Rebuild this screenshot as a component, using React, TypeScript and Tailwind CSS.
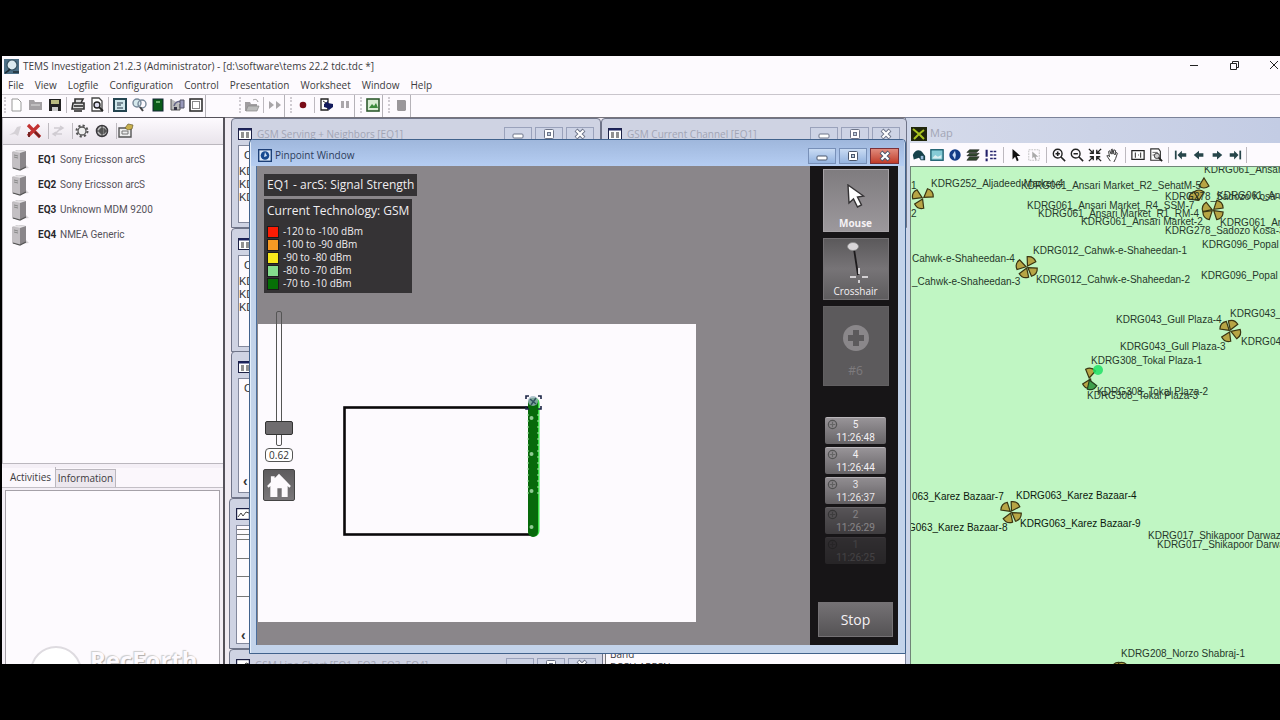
import React from "react";

type IconName =
  | "new" | "open" | "save" | "print" | "preview" | "dialog" | "find" | "book" | "export" | "frame"
  | "folder" | "forward" | "record" | "write" | "pause" | "picture" | "stack";

const glyphs: Record<IconName, React.ReactNode> = {
  new: <path d="M3 2h6l3 3v9H3z" fill="#fff" stroke="#999" />,
  open: <><path d="M1 3h5l1 2h7v8H1z" fill="#a3a0a3" /><path d="M3 8h9" stroke="#ddd" /></>,
  save: <><path d="M2 2h12v12H2z" fill="#222" /><path d="M4 3h8v4H4z" fill="#b9bb80" /><path d="M5 10h6v4H5z" fill="#ccc" /></>,
  print: <><path d="M5 6V2h8l-2 4M3 6h11v6H2z" fill="#ddd" stroke="#333" strokeWidth="1.6" /><path d="M4 9h9M4 14h8" stroke="#222" strokeWidth="1.6" /></>,
  preview: <><path d="M3 1h7l3 3v10H3z" fill="#fff" stroke="#444" strokeWidth="1.3" /><circle cx="8" cy="8" r="3" fill="#dde" stroke="#222" strokeWidth="1.4" /><path d="m10 10 4 4" stroke="#222" strokeWidth="1.8" /></>,
  dialog: <><rect x="2" y="2" width="12" height="12" fill="#cfe6ea" stroke="#244450" strokeWidth="2" /><path d="M5 6h6M5 8h4M5 11h6" stroke="#234" strokeWidth="1.2" /></>,
  find: <><circle cx="6" cy="6" r="4" fill="#d5e8ec" stroke="#789" strokeWidth="1.4" /><circle cx="11" cy="7" r="4" fill="none" stroke="#789" strokeWidth="1.4" /><path d="m9 10 3 4" stroke="#444" strokeWidth="2" /></>,
  book: <><rect x="3" y="2" width="10" height="12" fill="#0a5c1a" stroke="#123" /><path d="M6 5h4" stroke="#8c8" strokeWidth="1.5" /></>,
  export: <><path d="M2 2v11h9V7" fill="#bbb" stroke="#555" /><path d="M5 9c1-4 4-5 7-4" fill="none" stroke="#668" strokeWidth="1.6" /><path d="M11 3h4v8h-4z" fill="#99b" stroke="#556" /><path d="M5 10h3v3H5z" fill="#334" /></>,
  frame: <><rect x="2" y="2" width="12" height="12" fill="#fff" stroke="#333" strokeWidth="1.6" /><rect x="4.500" y="4.500" width="7" height="7" fill="#fff" stroke="#888" /></>,
  folder: <><path d="M1 5h5l1 2h6v7H1z" fill="#a09da0" /><path d="m4 9h11l-2 5H2z" fill="#bbb" stroke="#888" strokeWidth=".7" /><path d="M9 3c2-1 4-1 5 2" fill="none" stroke="#999" /></>,
  forward: <path d="m2 4 5 4-5 4zm7 0 5 4-5 4z" fill="#a8a5a8" />,
  record: <circle cx="8" cy="8" r="3.300" fill="#7a0c18" />,
  write: <><path d="M3 2h7v11H3z" fill="#fff" stroke="#222" strokeWidth="1.3" /><path d="m6 7 4-3v2l5 1v3l-4 3-2-2-3-1z" fill="#131a5c" /><path d="m5 4 3 2" stroke="#333" /></>,
  pause: <path d="M4 4h3v7H4zm5 0h3v7H9z" fill="#aaa6aa" />,
  picture: <><rect x="2" y="2" width="12" height="12" fill="#d7ecd2" stroke="#2f5a2f" strokeWidth="1.6" /><path d="m4 11 3-4 2 2 2-3 2 5z" fill="#3a8a3a" /></>,
  stack: <path d="M4 3h8l1 1v9l-1 1H5l-1-1z" fill="#9a979a" />,
};

const ToolButton = ({ name }: { name: IconName }) => (
  <button type="button" aria-label={name} className="flex w-[19px] shrink-0 justify-center">
    <svg viewBox="0 0 16 16" className="size-4">{glyphs[name]}</svg>
  </button>
);

const Sep = ({ wide }: { wide?: boolean }) => (
  <span className={`h-4 w-px shrink-0 bg-[#bdb9bf] ${wide ? "mx-[3px]" : "mr-px ml-[2px]"}`} />
);
const Grip = () => <span className="mx-px h-4 w-[2px] shrink-0 border-l-2 border-dotted border-[#d0ccd2]" />;

const ToolGroup = ({ sets, wide }: { sets: IconName[][]; wide?: boolean }) => (
  <div role="toolbar" className={`flex h-full items-center border-r border-[#b5b2b8] pb-[2px] ${wide ? "mr-8" : "mr-1"}`}>
    <Grip />
    {sets.map((set, i) => (
      <React.Fragment key={i}>
        {i > 0 && <Sep />}
        {set.map((n) => <ToolButton key={n} name={n} />)}
      </React.Fragment>
    ))}
  </div>
);

const menus = ["File", "View", "Logfile", "Configuration", "Control", "Presentation", "Worksheet", "Window", "Help"];

const devices = [
  ["EQ1", "Sony Ericsson arcS"],
  ["EQ2", "Sony Ericsson arcS"],
  ["EQ3", "Unknown MDM 9200"],
  ["EQ4", "NMEA Generic"],
];

const DeviceIcon = () => (
  <svg viewBox="0 0 20 22" className="h-[22px] w-5">
    <path d="m9 20 9-1-3-3z" fill="#d8d4d8" />
    <path d="m1 3 6-2 8 1v16l-6 3-8-2z" fill="#8a868a" />
    <path d="m1 3 8 1v17l-8-2z" fill="#c3bfc3" />
    <path d="m1 3 6-2 8 1-6 2z" fill="#e4e1e4" />
    <path d="M3 6l4 1M3 8l4 1" stroke="#888" />
    <path d="m2 19 7 2 6-3" fill="none" stroke="#555" strokeWidth="1.300" />
  </svg>
);

const Sidebar = () => (
  <aside className="flex w-[223px] shrink-0 flex-col border-t border-r-2 border-[#55525a] bg-[#f4eff6]">
    <div className="flex h-[27px] shrink-0 items-center border-b border-l border-[#bbb7be] bg-linear-to-b from-[#fdfafe] to-[#e9e4eb] pl-[5px]">
      <button type="button" aria-label="Connect" className="w-[18px]">
        <svg viewBox="0 0 16 16" className="size-4"><path d="m1 12 5-3 3-5 4-1-3 10-3-2z" fill="#d5d1d6" /></svg>
      </button>
      <button type="button" aria-label="Disconnect" className="w-5">
        <svg viewBox="0 0 16 16" className="size-4"><path d="m2 2 12 12M13 2 2 13" stroke="#c23232" strokeWidth="3.200" /><path d="m9 9 5 5M3 9v5" stroke="#6a2020" strokeWidth="1.800" /></svg>
      </button>
      <Sep />
      <button type="button" aria-label="Refresh" className="w-5">
        <svg viewBox="0 0 16 16" className="size-4"><path d="M4 5h7l-6 6h7M10 3l3 2-3 2M6 9l-3 2 3 2" fill="none" stroke="#d0ccd2" strokeWidth="1.500" /></svg>
      </button>
      <Sep />
      <button type="button" aria-label="Settings" className="w-5">
        <svg viewBox="0 0 16 16" className="size-4"><circle cx="8" cy="8" r="5.500" fill="none" stroke="#555" strokeWidth="2" strokeDasharray="2.200 2.100" /><circle cx="8" cy="8" r="4" fill="#eee" stroke="#555" strokeWidth="1.300" /></svg>
      </button>
      <button type="button" aria-label="Globe" className="w-5">
        <svg viewBox="0 0 16 16" className="size-4"><circle cx="8" cy="8" r="5.500" fill="#bbb" stroke="#3c3a3e" strokeWidth="1.500" /><path d="M8 3v10M6 6h5v4H6zM3 8h10" fill="none" stroke="#333" /></svg>
      </button>
      <Sep />
      <button type="button" aria-label="Properties" className="w-5">
        <svg viewBox="0 0 16 16" className="size-4"><path d="M1 5h12v9H1z" fill="#eee" stroke="#555" strokeWidth="1.400" /><path d="M4 8h6v3H4z" fill="none" stroke="#777" /><path d="m7 5 3-4 5 1-1 4-4 1z" fill="#c9b04c" stroke="#665c30" strokeWidth=".700" /></svg>
      </button>
    </div>
    <ul className="flex h-[319px] shrink-0 flex-col border-b border-l border-[#bbb7be] bg-[#fdfafe] pt-[2px] font-['Roboto',sans-serif]">
      {devices.map(([id, label]) => (
        <li key={id} className="flex h-[25px] items-center pl-2 text-[#55525a]">
          <DeviceIcon />
          <b className="ml-[7px] w-[22px] text-[#2a282c]">{id}</b>
          <span>{label}</span>
        </li>
      ))}
    </ul>
    <div role="tablist" className="mt-1 flex h-5 shrink-0 items-end border-b border-[#c3bfc6] bg-[#fbf7fc]">
      <button type="button" role="tab" aria-selected="true" className="h-5 w-[54px] border-r border-[#bbb7be] pl-1">Activities</button>
      <button type="button" role="tab" aria-selected="false" className="h-[18px] w-[60px] border-t border-r border-[#bbb7be] bg-[#ece7ee]">Information</button>
    </div>
    <div className="relative mx-[3px] mt-[2px] flex-1 overflow-hidden border border-b-0 border-[#a5a1a8] bg-[#fdfafe]">
      <div className="absolute -bottom-2 left-6 size-[52px] translate-y-1/2 rounded-full border-2 border-[#dedbe0] bg-white" />
      <p className="absolute -bottom-2 left-[84px] text-2xl leading-6 font-bold text-[#fdfafe] [text-shadow:1px_1px_1px_#aaa,-1px_-1px_1px_#ccc]">RecForth</p>
    </div>
  </aside>
);

const WindowButtons = ({ active }: { active?: boolean }) => {
  const base = `flex w-[28px] items-center justify-center border ${active ? "border-[#7890b8] bg-linear-to-b from-[#c9dbf3] to-[#94b3df] h-4" : "h-[15px] border-[#9aa2bb] bg-[#cdd3e5]"}`;
  const ink = active ? "#4a566c" : "#6d7488";
  return (
    <div className="flex shrink-0 gap-[3px]">
      <button type="button" aria-label="Minimize" className={base}>
        <svg viewBox="0 0 14 14" className="size-[14px]"><rect x="2" y="7" width="10" height="4" rx="1" fill="#fff" stroke={ink} /></svg>
      </button>
      <button type="button" aria-label="Maximize" className={base}>
        <svg viewBox="0 0 14 14" className="size-[14px]"><rect x="2.500" y="2.500" width="9" height="9" rx="1" fill="#fff" stroke={ink} /><rect x="5.500" y="5.500" width="3" height="3" fill="#bcd" stroke={ink} /></svg>
      </button>
      <button
        type="button"
        aria-label="Close"
        className={active ? "flex h-4 w-[29px] items-center justify-center border border-[#7c3038] bg-linear-to-b from-[#e08a7c] to-[#c03a28]" : base}
      >
        <svg viewBox="0 0 14 14" className="size-[14px]"><path d="m3 3 8 8M11 3l-8 8" stroke={ink} strokeWidth="4" /><path d="m3.500 3.500 7 7M10.500 3.500l-7 7" stroke="#fff" strokeWidth="2.200" /></svg>
      </button>
    </div>
  );
};

const GridIcon = () => (
  <svg viewBox="0 0 14 12" className="h-3 w-[14px] shrink-0">
    <rect x=".5" y=".5" width="13" height="11" fill="#fff" stroke="#1d2145" />
    <path d="M1 1.500h12" stroke="#1d2460" strokeWidth="2" />
    <path d="M3 5h3M8 5h3M3 7h3M8 7h3M3 9h3M8 9h3" stroke="#222" strokeWidth="1.200" />
  </svg>
);

const ChartIcon = () => (
  <svg viewBox="0 0 14 12" className="h-3 w-[14px] shrink-0">
    <rect x=".5" y=".5" width="13" height="11" fill="#fff" stroke="#1d2145" strokeWidth="1.400" />
    <path d="m2 9 3-4 2 3 3-4 3 1" fill="none" stroke="#444" />
  </svg>
);

const BackWindow = ({ place, title, chart, buttons, children }: {
  place: string; title?: string; chart?: boolean; buttons?: boolean; children?: React.ReactNode;
}) => (
  <section className={`absolute flex flex-col overflow-hidden rounded-t border border-[#6f7488] bg-[#cfd3e3] px-[6px] pb-1 ${place}`}>
    <header className="flex h-[26px] shrink-0 items-center gap-[5px] pt-1 text-[#a2a5b5]">
      {chart ? <ChartIcon /> : <GridIcon />}
      <h2 className="flex-1 truncate">{title}</h2>
      {buttons && <WindowButtons />}
    </header>
    <div className="flex-1 overflow-hidden border border-[#83889c] bg-[#fdfafe] font-['Liberation_Sans',sans-serif] text-[11px] leading-[13px] text-[#333]">{children}</div>
  </section>
);

const Rows = ({ rows }: { rows: number }) => (
  <>
    <p className="mt-[3px] pl-[5px]">Cell</p>
    {Array.from({ length: rows }, (_, i) => <p key={i} className={i === 0 ? "mt-[3px]" : ""}>KDRG</p>)}
  </>
);

const bands = [
  ["bg-[#fb1c04]", "-120 to -100 dBm"],
  ["bg-[#f79a24]", "-100 to -90 dBm"],
  ["bg-[#f8e81c]", "-90 to -80 dBm"],
  ["bg-[#84dc8c]", "-80 to -70 dBm"],
  ["bg-[#067006]", "-70 to -10 dBm"],
];

const points = [
  ["5", "11:26:48", "opacity-100"],
  ["4", "11:26:44", "opacity-100"],
  ["3", "11:26:37", "opacity-95"],
  ["2", "11:26:29", "opacity-50"],
  ["1", "11:26:25", "opacity-20"],
];

const FloorPlan = () => (
  <svg viewBox="0 0 438 298" className="absolute top-[158px] left-px h-[298px] w-[438px] bg-[#fdfafe]">
    <rect x="86.500" y="83.500" width="188" height="127" fill="none" stroke="#0a080a" strokeWidth="2.600" />
    <path d="M276 79v128" stroke="#39df46" strokeWidth="11" strokeLinecap="round" />
    <path d="M275 79v129" stroke="#07690b" strokeWidth="10" strokeLinecap="round" />
    <path d="M270 90v80M280 90v80" stroke="#a5e8a8" strokeWidth="1" strokeDasharray="2 4" />
    {[94, 130, 167, 203].map((y) => <circle key={y} cx="273.500" cy={y} r="2" fill="#8fca92" />)}
    <circle cx="275" cy="77" r="5" fill="#9db5c0" opacity=".8" />
    <path d="m272 75 6 5M278 74l-5 7" stroke="#31525e" strokeWidth="1.500" />
    <path d="M268 75v-3h3M280 72h3v3M283 82v3h-3M271 85h-3v-3" fill="none" stroke="#1c2546" strokeWidth="1.600" />
  </svg>
);

const ModeButton = ({ label, tone, children }: { label: string; tone: string; children: React.ReactNode }) => (
  <button type="button" className={`flex w-[66px] shrink-0 flex-col items-center justify-end border ${tone}`}>
    {children}
    <span>{label}</span>
  </button>
);

const PinpointWindow = () => (
  <section className="absolute top-[21px] left-6 z-10 flex h-[515px] w-[657px] flex-col rounded-t border border-[#41628c] bg-[#c3d3ea] pr-[7px] pb-2 pl-[6px] shadow-[inset_1px_1px_0_#e4eefa]">
    <header className="-mr-[6px] -ml-[5px] flex h-[26px] shrink-0 items-center bg-linear-to-b from-[#9fb7dc] to-[#b5cdf2] pt-[5px] pr-[5px] pl-[7px] text-[#2d3d5c]">
      <svg viewBox="0 0 14 13" className="mr-[3px] h-[13px] w-[14px]">
        <rect x=".7" y=".7" width="12.600" height="11.600" fill="#dbe8f8" stroke="#1c3f77" strokeWidth="1.400" />
        <circle cx="7" cy="6.500" r="4.300" fill="#174a90" /><path d="m7 3 2 4-3 1z" fill="#cfe2f6" />
      </svg>
      <h2 className="flex-1">Pinpoint Window</h2>
      <WindowButtons active />
    </header>
    <div className="flex min-h-0 flex-1 border-l border-[#4b6e9d] bg-[#8a868a]">
      <div className="relative flex-1 overflow-hidden">
        <FloorPlan />
        <div className="relative flex flex-col items-start pt-2 pl-[7px] text-[#f0edf0]">
          <h3 className="h-[22px] w-[153px] bg-[#353335] px-[3px] text-xs leading-[22px] whitespace-nowrap">EQ1 - arcS: Signal Strength</h3>
          <div className="mt-[3px] h-[94px] w-[148px] bg-[#353335] px-[3px] pt-px">
            <h4 className="text-xs leading-[22px] whitespace-nowrap">Current Technology: GSM</h4>
            <ul className="pt-[3px]">
              {bands.map(([color, text]) => (
                <li key={text} className="flex h-[13px] items-center gap-1 leading-[13px] font-medium">
                  <span className={`size-3 border border-[#1c1a1c] ${color}`} />{text}
                </li>
              ))}
            </ul>
          </div>
          <div className="mt-[18px] -ml-px flex w-8 flex-col items-center">
            <div className="relative flex h-[135px] w-7 justify-center">
              <span className="w-[6px] rounded-[2px] border border-[#555]" />
              <input
                type="range"
                aria-label="Zoom"
                defaultValue={9}
                className="absolute inset-0 h-[135px] w-7 appearance-none bg-transparent [direction:rtl] [writing-mode:vertical-lr] [&::-webkit-slider-thumb]:h-[14px] [&::-webkit-slider-thumb]:w-7 [&::-webkit-slider-thumb]:appearance-none [&::-webkit-slider-thumb]:rounded-[2px] [&::-webkit-slider-thumb]:border [&::-webkit-slider-thumb]:border-[#333] [&::-webkit-slider-thumb]:bg-[#6f6c6f]"
              />
            </div>
            <output className="mt-[2px] h-[14px] w-7 rounded border border-[#555] bg-white text-center leading-3 text-[#333]">0.62</output>
            <button type="button" aria-label="Home" className="mt-[7px] flex size-8 items-center justify-center rounded-[2px] border border-[#444] bg-linear-to-b from-[#5e5c5e] to-[#7a777a]">
              <svg viewBox="0 0 24 24" className="size-[26px]"><path d="M1 13 12 1.500 23 13l-1.500 1.500L20 13v10h-5.500v-8h-4v8H4V13l-1.500 1.500zM4.500 4H8v2.500L4.500 10z" fill="#fdfafd" /></svg>
            </button>
          </div>
        </div>
      </div>
      <div className="flex w-[88px] shrink-0 flex-col items-center bg-[#171517] py-[3px] pl-[3px] text-[#f4f1f4]">
        <ModeButton label="Mouse" tone="h-[63px] font-bold border-[#a7a3a7] bg-linear-to-b from-[#7f7c7f] to-[#9c989c]">
          <svg viewBox="0 0 20 24" className="mb-2 h-6 w-5"><path d="m2 1 1 18 4.500-4 4 8 4-2-4-8 6-1z" fill="#fff" stroke="#353335" strokeWidth="1.400" /></svg>
        </ModeButton>
        <div className="h-[6px]" />
        <ModeButton label="Crosshair" tone="h-[62px] border-[#757275] bg-linear-to-b from-[#5b595b] via-[#777477] to-[#5e5c5e]">
          <svg viewBox="0 0 26 42" className="h-[42px] w-[26px]">
            <path d="m11 7 4 26" stroke="#1d1b1d" strokeWidth="1.800" />
            <ellipse cx="10" cy="4.500" rx="5.500" ry="4" fill="#d9d6d9" stroke="#888" strokeWidth=".700" />
            <path d="M7 35h6M19 35h6M16 26v6M16 38v3" stroke="#f4f1f4" strokeWidth="1.500" />
          </svg>
        </ModeButton>
        <div className="h-[6px]" />
        <ModeButton label="#6" tone="h-20 pb-[6px] text-xs border-[#626062] bg-[#5c5a5c] text-[#7e7b7e]">
          <svg viewBox="0 0 26 26" className="mb-3 size-[26px]"><circle cx="13" cy="13" r="13" fill="#8a878a" /><path d="M13 5v16M5 13h16" stroke="#5c5a5c" strokeWidth="6" /></svg>
        </ModeButton>
        <ol className="mt-[31px] flex flex-col gap-[3px] font-['Roboto',sans-serif]">
          {points.map(([n, time, fade]) => (
            <li key={n} className={`relative h-[27px] w-[61px] rounded-[2px] border-t border-[#bbb7bb] bg-linear-to-b from-[#989498] to-[#676467] text-center leading-[13px] ${fade}`}>
              <svg viewBox="0 0 12 12" className="absolute top-px left-[2px] size-[11px]"><circle cx="6" cy="6" r="4.500" fill="#8e8a8e" stroke="#555" strokeWidth="1.400" /><path d="M6 3v6M3 6h6" stroke="#666" strokeWidth="1.300" /></svg>
              {n}
              <br />
              {time}
            </li>
          ))}
        </ol>
        <button type="button" className="mt-auto mb-[5px] h-[35px] w-[75px] shrink-0 border border-[#757275] bg-linear-to-b from-[#757275] to-[#555355] text-sm">Stop</button>
      </div>
    </div>
  </section>
);

const mapLabels: [number, number, string, boolean?][] = [
  [0, 19, "1"], [0, 47, "2"],
  [20, 17, "KDRG252_Aljadeed Market-4"],
  [110, 19, "KDRG061_Ansari Market_R2_SehatM-5"],
  [293, 3, "KDRG061_Ansari Market"],
  [254, 30, "KDRG278_Sadozo Kosa-1"],
  [306, 29, "KDRG061_Ansari"],
  [116, 39, "KDRG061_Ansari Market_R4_SSM-7"],
  [127, 47, "KDRG061_Ansari Market_R1_RM-4"],
  [170, 55, "KDRG061_Ansari Market-2"],
  [309, 56, "KDRG061_Ansari"],
  [254, 64, "KDRG278_Sadozo Kosa-3"],
  [291, 78, "KDRG096_Popal"],
  [290, 109, "KDRG096_Popal"],
  [122, 84, "KDRG012_Cahwk-e-Shaheedan-1"],
  [125, 113, "KDRG012_Cahwk-e-Shaheedan-2"],
  [1, 92, "Cahwk-e-Shaheedan-4"],
  [1, 115, "_Cahwk-e-Shaheedan-3"],
  [205, 153, "KDRG043_Gull Plaza-4"],
  [319, 147, "KDRG043_Gull"],
  [330, 175, "KDRG043_Gull"],
  [209, 180, "KDRG043_Gull Plaza-3"],
  [180, 194, "KDRG308_Tokal Plaza-1"],
  [186, 225, "KDRG308_Tokal Plaza-2"],
  [176, 229, "KDRG308_Tokal Plaza-3"],
  [1, 330, "063_Karez Bazaar-7", true],
  [105, 329, "KDRG063_Karez Bazaar-4", true],
  [-3, 361, "G063_Karez Bazaar-8", true],
  [109, 357, "KDRG063_Karez Bazaar-9", true],
  [237, 369, "KDRG017_Shikapoor Darwaza"],
  [246, 378, "KDRG017_Shikapoor Darwaza"],
  [210, 487, "KDRG208_Norzo Shabraj-1"],
];

const sites: [number, number, number[]][] = [
  [12, 31, [-65, 55, 205]],
  [293, 10, [180]],
  [288, 34, [-50, 0]],
  [302, 43, [-70, -130, 50, 130]],
  [116, 100, [30, -75, -160, 125]],
  [319, 164, [-50, 20, 110, 205]],
  [178, 212, [10]],
  [180, 211, [205]],
  [100, 345, [-50, 30, 125, 200]],
  [209, 506, [-20, 20]],
];

const MapIcon = ({ label, children }: { label: string; children: React.ReactNode }) => (
  <button type="button" aria-label={label} className="flex w-[18px] shrink-0 justify-center">
    <svg viewBox="0 0 16 16" className="size-[14px]">{children}</svg>
  </button>
);

const MapWindow = () => (
  <section className="flex min-w-0 flex-1 flex-col border-t border-l border-[#7b8299] bg-[#cdd5e8] pl-1">
    <header className="flex h-[25px] shrink-0 items-center gap-[3px] bg-linear-to-r from-[#d5daea] to-[#c3cce4] pt-[6px] pl-px text-[11px] text-[#a2a5b5]">
      <svg viewBox="0 0 16 14" className="h-[14px] w-4"><rect width="16" height="14" fill="#20260c" /><path d="m2 2 6 5 5-4M8 7l-5 5M8 7l5 5" stroke="#a9c420" strokeWidth="2" fill="none" /></svg>
      <h2>Map</h2>
    </header>
    <div className="flex h-[23px] shrink-0 items-center bg-[#fdfafe]">
      <MapIcon label="Binoculars"><path d="M1 8c2-6 8-7 11-3l3 4v5h-5l-2-3-6 2z" fill="#16404a" /><path d="M10 9h3v4h-3z" fill="#9bd" /></MapIcon>
      <MapIcon label="Image"><rect x="1" y="2" width="14" height="12" fill="#86cbd6" stroke="#155a6a" strokeWidth="1.500" /><path d="m3 11 3-3 3 2 4-2v4H3z" fill="#d9eef0" /></MapIcon>
      <MapIcon label="Globe"><circle cx="8" cy="8" r="6.500" fill="#123c86" /><path d="m8 3-3 5 3 5 1-5z" fill="#c7daf2" /></MapIcon>
      <MapIcon label="Layers"><path d="m4 2h11l-3 3H1zM4 6h11l-3 3H1zM4 10h11l-3 4H1z" fill="#30482c" stroke="#222" strokeWidth=".700" /></MapIcon>
      <MapIcon label="Legend"><path d="M3 2v8M3 12v3" stroke="#22206a" strokeWidth="2.400" /><path d="M7 4h8M7 8h8M7 12h8" stroke="#22206a" strokeWidth="1.800" strokeDasharray="3 1" /></MapIcon>
      <Sep wide />
      <MapIcon label="Pointer"><path d="M4 1v12l3-3 2 5 2-1-2-5h4z" fill="#111" /></MapIcon>
      <MapIcon label="Select area"><rect x="2" y="2" width="12" height="12" fill="none" stroke="#bbb" strokeDasharray="2 1" /><path d="M6 4v8l2-2 2 4 1-1-1-3h3z" fill="#aaa" /></MapIcon>
      <Sep wide />
      <MapIcon label="Zoom in"><circle cx="6.500" cy="6.500" r="5" fill="none" stroke="#222" strokeWidth="1.600" /><path d="M4 6.500h5M6.500 4v5M10 10l5 5" stroke="#222" strokeWidth="1.800" /></MapIcon>
      <MapIcon label="Zoom out"><circle cx="6.500" cy="6.500" r="5" fill="none" stroke="#222" strokeWidth="1.600" /><path d="M4 6.500h5M10 10l5 5" stroke="#222" strokeWidth="1.800" /></MapIcon>
      <MapIcon label="Fit"><path d="m1 1 5 5M15 1l-5 5M1 15l5-5M15 15l-5-5M6 2v4H2M10 2v4h4M6 14v-4H2M10 14v-4h4" fill="none" stroke="#222" strokeWidth="1.500" /></MapIcon>
      <MapIcon label="Pan"><path d="M5 15 1 9l1-1 2 2-1-6 1-1 2 4V2l1-1 1 6 1-5 2 1-1 5 2-3 1 1-2 6-2 4" fill="#fff" stroke="#333" strokeWidth="1.100" /></MapIcon>
      <Sep wide />
      <MapIcon label="Scale"><rect x="1" y="3" width="14" height="10" fill="#fff" stroke="#222" strokeWidth="1.400" /><path d="M5 5v6M8 8h1M11 5v6" stroke="#444" strokeWidth="1.300" /></MapIcon>
      <MapIcon label="Find"><path d="M2 1h9l2 3v10H2z" fill="#fff" stroke="#333" strokeWidth="1.300" /><path d="M4 5h6M4 8h3" stroke="#555" /><circle cx="9" cy="9" r="3" fill="#ccc" stroke="#333" /><path d="m11 11 4 4" stroke="#222" strokeWidth="2" /></MapIcon>
      <Sep wide />
      <MapIcon label="First"><path d="M2 3v10" stroke="#27454a" strokeWidth="2" /><path d="m4 8 5-5v3h5v4H9v3z" fill="#27454a" /></MapIcon>
      <MapIcon label="Previous"><path d="m2 8 6-5v3h5v4H8v3z" fill="#27454a" /></MapIcon>
      <MapIcon label="Next"><path d="M14 8 8 3v3H3v4h5v3z" fill="#27454a" /></MapIcon>
      <MapIcon label="Last"><path d="M14 3v10" stroke="#27454a" strokeWidth="2" /><path d="M12 8 7 3v3H2v4h5v3z" fill="#27454a" /></MapIcon>
      <Sep />
    </div>
    <div className="relative min-h-0 flex-1 overflow-hidden border-t border-l border-[#6f8577] bg-[#c0f6c3] font-['Liberation_Sans',sans-serif] leading-3">
      <svg className="absolute inset-0 size-full">
        {sites.map(([x, y, turns]) => turns.map((t) => (
          <path key={`${x}-${y}-${t}`} d="M0-1-5-9Q0-13 5-9Z" transform={`translate(${x} ${y}) rotate(${t})`} fill="#b7a545" stroke="#3a3512" strokeWidth="1.200" />
        )))}
        <path d="M0-1-5-9Q0-13 5-9Z" transform="translate(178 212) rotate(160)" fill="#3fa04c" stroke="#23401c" strokeWidth="1.200" />
        <circle cx="187" cy="203" r="5" fill="#1fe065" opacity=".85" />
      </svg>
      {mapLabels.map(([x, y, text, strong], i) => (
        <span key={i} style={{ left: x, top: y - 6 }} className={`absolute whitespace-nowrap ${strong ? "text-[#0c180d]" : "text-[#26382a]"}`}>{text}</span>
      ))}
    </div>
  </section>
);

export default function App() {
  return (
    <div className="flex h-screen flex-col overflow-hidden bg-black py-14 pl-[2px] font-['Open_Sans',sans-serif] text-[10px] text-[#3c3a40]">
      <header className="flex h-5 shrink-0 items-center bg-[#fdfafe] px-[2px]">
        <svg viewBox="0 0 15 15" className="mr-1 size-[15px]">
          <rect width="15" height="15" fill="#4c6f86" /><circle cx="8" cy="6" r="5" fill="#dceaf0" stroke="#35505f" strokeWidth="1.200" /><path d="M1 14c3-1 4-3 5-4M9 13h6" stroke="#1e2c35" strokeWidth="1.600" />
        </svg>
        <h1 className="flex-1">{"TEMS Investigation 21.2.3 (Administrator) - [d:\\software\\tems 22.2 tdc.tdc *]"}</h1>
        <div className="flex items-center gap-7 pb-[3px]">
          <button type="button" aria-label="Minimize"><svg viewBox="0 0 12 12" className="size-3"><path d="M2 6.500h8" stroke="#222" /></svg></button>
          <button type="button" aria-label="Restore"><svg viewBox="0 0 12 12" className="size-3"><path d="M2.500 4.500h6v6h-6zM4.500 4V2.500h6v6H9" fill="none" stroke="#222" /></svg></button>
          <button type="button" aria-label="Close" className="-mr-[2px]"><svg viewBox="0 0 12 12" className="size-3"><path d="m2 2 8 8M10 2l-8 8" stroke="#222" /></svg></button>
        </div>
      </header>
      <nav className="flex h-[18px] shrink-0 items-center gap-[11px] bg-[#fdfafe] pl-[6px]">
        {menus.map((m) => <a key={m} href={`#${m.toLowerCase()}`}>{m}</a>)}
      </nav>
      <div className="flex h-[23px] shrink-0 items-center border-t border-[#c9c5cc] bg-[#fdfafe] pl-px">
        <ToolGroup wide sets={[["new", "open", "save"], ["print", "preview"], ["dialog", "find", "book", "export", "frame"]]} />
        <ToolGroup sets={[["folder"], ["forward"]]} />
        <ToolGroup sets={[["record"], ["write", "pause"]]} />
        <ToolGroup sets={[["picture"]]} />
        <ToolGroup sets={[["stack"]]} />
      </div>
      <main className="flex min-h-0 flex-1 overflow-hidden bg-[#f0ebf2]">
        <Sidebar />
        <div className="relative w-[680px] shrink-0 border-t border-[#77747c]">
          <BackWindow place="top-0 left-[6px] h-[110px] w-[370px]" title="GSM Serving + Neighbors [EQ1]" buttons><Rows rows={3} /></BackWindow>
          <BackWindow place="top-0 left-[376px] h-[110px] w-[306px]" title="GSM Current Channel [EQ1]" buttons />
          <BackWindow place="top-[110px] left-[6px] h-[124px] w-[370px]"><Rows rows={3} /></BackWindow>
          <BackWindow place="top-[233px] left-[6px] h-[147px] w-[370px]">
            <Rows rows={0} />
            <p className="mt-[76px] pl-1 text-sm font-bold">‹</p>
          </BackWindow>
          <BackWindow chart place="top-[380px] left-[4px] h-[151px] w-[370px]">
            <div className="flex flex-col divide-y divide-[#777] border-b border-[#777]">
              <i className="h-[4px]" /><i className="h-[5px]" /><i className="h-[5px]" /><i className="h-[19px]" /><i className="h-[18px]" /><i className="h-[19px]" />
            </div>
            <p className="mt-7 pl-1 text-sm font-bold">‹</p>
          </BackWindow>
          <BackWindow chart buttons place="top-[531px] left-[4px] h-[40px] w-[374px]" title="GSM Line Chart [EQ1, EQ2, EQ3, EQ4]" />
          <div className="absolute top-[530px] left-[380px] h-6 w-[300px] overflow-hidden border-l border-[#777] bg-[#fdfafe] pl-1 leading-[13px]">
            Band
            <br />
            BCCH ARFCN
          </div>
          <PinpointWindow />
        </div>
        <MapWindow />
      </main>
    </div>
  );
}
